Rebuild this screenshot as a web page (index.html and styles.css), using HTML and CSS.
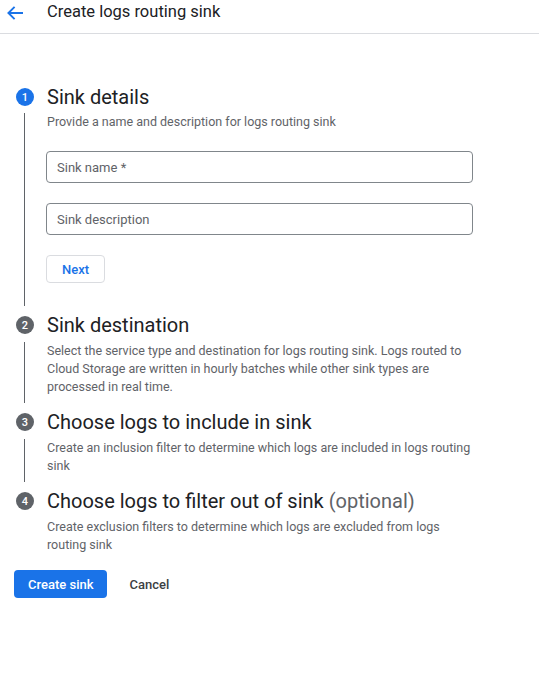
FILE: index.html
```html
<!DOCTYPE html>
<html>
<head>
<meta charset="utf-8">
<link rel="stylesheet" href="styles.css">
</head>
<body>
<header class="topbar">
  <svg class="back" width="20" height="20" viewBox="0 0 20 20" aria-hidden="true">
    <path d="M18 10H3.6M9.6 3.8L3.4 10l6.2 6.2" fill="none" stroke="#1a73e8" stroke-width="1.9"/>
  </svg>
  <h1 class="page-title">Create logs routing sink</h1>
</header>

<main class="stepper">
  <section class="step step-first">
    <div class="step-head">
      <span class="badge badge-active">1</span>
      <h2 class="step-title">Sink details</h2>
    </div>
    <div class="step-body">
      <p class="step-desc">Provide a name and description for logs routing sink</p>
      <div class="field field-first">Sink name *</div>
      <div class="field">Sink description</div>
      <button class="btn-outline">Next</button>
    </div>
  </section>

  <section class="step">
    <div class="step-head">
      <span class="badge">2</span>
      <h2 class="step-title">Sink destination</h2>
    </div>
    <div class="step-body">
      <p class="step-desc">Select the service type and destination for logs routing sink. Logs routed to Cloud Storage are written in hourly batches while other sink types are processed in real time.</p>
    </div>
  </section>

  <section class="step">
    <div class="step-head">
      <span class="badge">3</span>
      <h2 class="step-title">Choose logs to include in sink</h2>
    </div>
    <div class="step-body">
      <p class="step-desc">Create an inclusion filter to determine which logs are included in logs routing sink</p>
    </div>
  </section>

  <section class="step step-last">
    <div class="step-head">
      <span class="badge">4</span>
      <h2 class="step-title">Choose logs to filter out of sink <span class="optional">(optional)</span></h2>
    </div>
    <div class="step-body">
      <p class="step-desc">Create exclusion filters to determine which logs are excluded from logs routing sink</p>
    </div>
  </section>
</main>

<div class="actions">
  <button class="btn-primary">Create sink</button>
  <button class="btn-text">Cancel</button>
</div>
</body>
</html>
```

FILE: styles.css
```css
* { box-sizing: border-box; }
html, body { margin: 0; padding: 0; background: #fff; }
body {
  font-family: Roboto, "Noto Sans", Arial, sans-serif;
  color: #202124;
  width: 539px;
}
.topbar {
  display: flex;
  align-items: flex-start;
  height: 34px;
  border-bottom: 1px solid #dadce0;
}
.back { display: block; margin: 3px 0 0 5px; flex: none; }
.page-title {
  margin: 0 0 0 22px;
  font-size: 16.5px;
  line-height: 23px;
  font-weight: 400;
  color: #202124;
}
.stepper {
  padding-top: 47px;
}
.step-head {
  display: flex;
  align-items: center;
  height: 32px;
}
.badge {
  width: 18px;
  height: 18px;
  border-radius: 50%;
  background: #5f6368;
  color: #fff;
  font-size: 11px;
  font-weight: 500;
  display: flex;
  align-items: center;
  justify-content: center;
  margin-left: 16px;
  flex: none;
}
.badge-active { background: #1a73e8; }
.step-title {
  margin: 0 0 0 13px;
  font-size: 20px;
  font-weight: 400;
  color: #202124;
}
.optional { color: #5f6368; }
.step-body {
  margin: 0 0 3px 24px;
  padding: 0 66px 7px 22px;
  border-left: 1px solid #5f6368;
}
.step-last .step-body { border-left-color: transparent; }
.step-desc {
  margin: 1px 0 0;
  font-size: 12.5px;
  line-height: 18px;
  color: #5f6368;
}
.step-first .step-desc { margin-top: 0; }
.field {
  height: 32px;
  border: 1px solid #80868b;
  border-radius: 4px;
  padding: 0 10px;
  display: flex;
  align-items: center;
  font-size: 13px;
  color: #5f6368;
  margin: 0 0 20px -1px;
}
.field-first { margin-top: 20px; }
.btn-outline {
  display: block;
  height: 28px;
  padding: 0 15px;
  margin: 2px 0 16px -1px;
  border: 1px solid #dadce0;
  border-radius: 4px;
  background: #fff;
  color: #1a73e8;
  font-family: inherit;
  font-size: 13px;
  font-weight: 500;
}
.actions {
  display: flex;
  align-items: center;
  padding: 6px 0 0 14px;
}
.btn-primary {
  height: 28px;
  padding: 0 14px;
  border: none;
  border-radius: 4px;
  background: #1a73e8;
  color: #fff;
  font-family: inherit;
  font-size: 13px;
  font-weight: 500;
}
.btn-text {
  height: 28px;
  padding: 0 16px;
  margin-left: 6px;
  border: none;
  background: transparent;
  color: #3c4043;
  font-family: inherit;
  font-size: 13px;
  font-weight: 500;
}
```
